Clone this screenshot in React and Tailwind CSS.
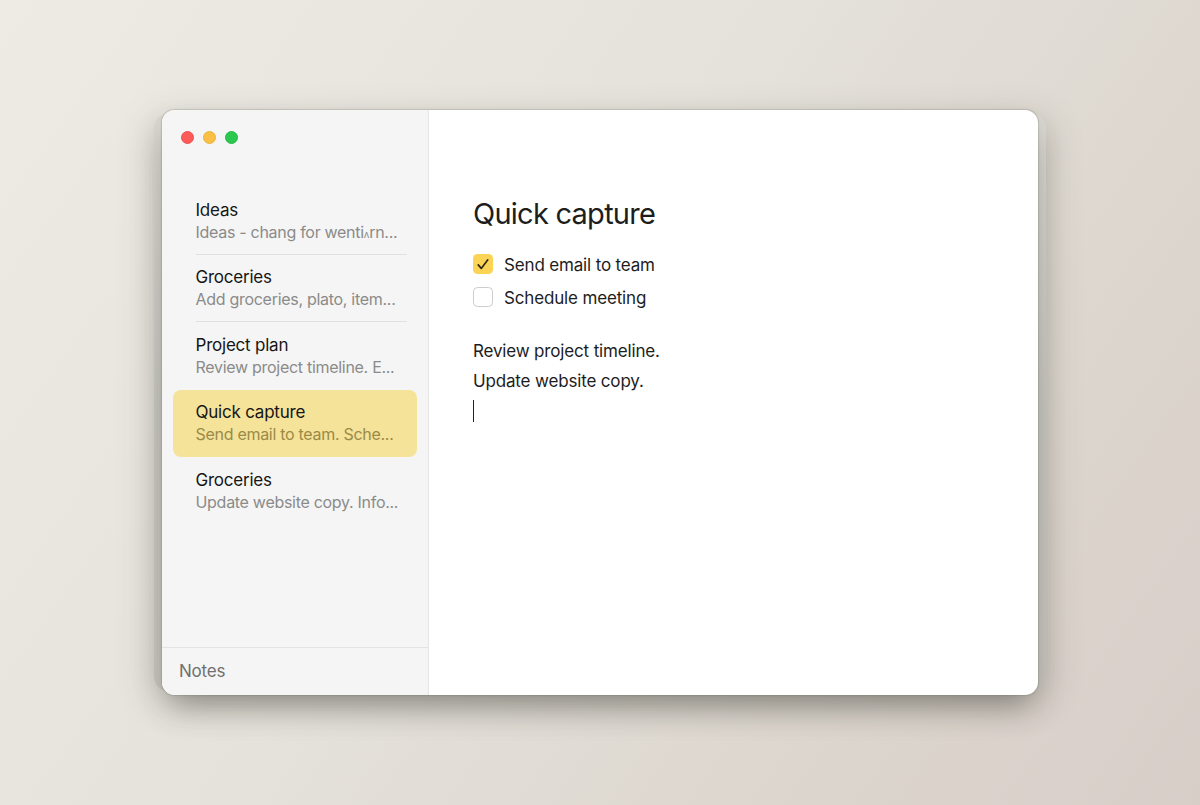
import { useState } from 'react';

const notes = [
  { id: 1, title: 'Ideas', preview: 'Ideas - chang for wenti', tail: 'rn...' },
  { id: 2, title: 'Groceries', preview: 'Add groceries, plato, item...' },
  { id: 3, title: 'Project plan', preview: 'Review project timeline. E...' },
  { id: 4, title: 'Quick capture', preview: 'Send email to team. Sche...' },
  { id: 5, title: 'Groceries', preview: 'Update website copy. Info...' },
];

function TrafficLights() {
  return (
    <div className="flex gap-[9px] pl-[19px] pt-[21px]">
      <span className="size-[13px] rounded-full border border-[#ec5351] bg-[#fc5b57]" />
      <span className="size-[13px] rounded-full border border-[#eab33c] bg-[#fbbf45]" />
      <span className="size-[13px] rounded-full border border-[#25b947] bg-[#2bc84f]" />
    </div>
  );
}

function NoteItem({ note, active, divider, onSelect }) {
  return (
    <li
      onClick={onSelect}
      className={`mx-[11px] h-[67.5px] cursor-default pl-[22.5px] pr-2.5 ${active ? 'rounded-lg bg-[#f5e39a]' : ''}`}
    >
      <div className={`h-full whitespace-nowrap pt-[11.5px] ${divider ? 'border-b border-[#e0e0df]' : ''}`}>
        <p className="text-[17px] leading-[23px] tracking-[-0.22px] text-[#161616]">{note.title}</p>
        <p className={`-mt-px text-[16px] leading-[22px] tracking-[-0.29px] ${active ? 'text-[#9b8a48]' : 'text-[#8b8b8a]'}`}>
          {note.preview}
          {note.tail && (
            <>
              <span className="text-[10px]">ʌ</span>
              {note.tail}
            </>
          )}
        </p>
      </div>
    </li>
  );
}

function Task({ label, done, onToggle }) {
  return (
    <label className="flex h-[33px] items-center gap-[11px]" onClick={onToggle}>
      <span
        className={`flex size-5 items-center justify-center rounded-[4.5px] ${done ? 'bg-[#fbd456]' : 'border-[1.5px] border-[#cdcdcd] bg-white'}`}
      >
        {done && (
          <svg viewBox="0 0 20 20" className="size-5" fill="none">
            <path d="M5.2 10.9 8.3 14.4 14.8 5.8" stroke="#2b2614" strokeWidth="1.6" strokeLinecap="round" strokeLinejoin="round" />
          </svg>
        )}
      </span>
      <span className="pt-[3px]">{label}</span>
    </label>
  );
}

export default function App() {
  const [selected, setSelected] = useState(4);
  const [tasks, setTasks] = useState([
    { label: 'Send email to team', done: true },
    { label: 'Schedule meeting', done: false },
  ]);

  const toggle = (index) =>
    setTasks(tasks.map((t, i) => (i === index ? { ...t, done: !t.done } : t)));

  return (
    <div className="flex h-screen justify-center overflow-hidden bg-[linear-gradient(125deg,#edebe4_0%,#e5e2db_45%,#ddd7cf_72%,#d7cec8_100%)] pt-[110px] font-['Inter',sans-serif]">
      <div className="relative h-[585px] w-[876px]">
        {/* Back plate that shows along both sides */}
        <div className="absolute -inset-x-2 bottom-1 top-1 rounded-[14px] bg-linear-to-b from-[#d9d6d0] via-[#c6c5bf] to-[#c8c4bd] shadow-[0_8px_36px_rgba(70,70,60,0.25)]" />

        {/* Window */}
        <div className="relative flex h-full overflow-hidden rounded-[13px] bg-white shadow-[0_0_1px_0.5px_rgba(110,110,100,0.25),0_18px_32px_-8px_rgba(60,60,50,0.45)]">
          <aside className="flex w-[267px] flex-col border-r border-[#e6e6e5] bg-[#f5f5f5]">
            <TrafficLights />
            <ul className="mt-[43px] flex-1">
              {notes.map((note, i) => (
                <NoteItem
                  key={note.id}
                  note={note}
                  active={note.id === selected}
                  divider={i < 2}
                  onSelect={() => setSelected(note.id)}
                />
              ))}
            </ul>
            <footer className="flex h-[48px] items-center border-t border-[#e3e3e2] pl-[17px] text-[17px] tracking-[-0.2px] text-[#70706f]">
              Notes
            </footer>
          </aside>

          <main className="flex-1 pl-11 pt-[86px] text-[17px] tracking-[-0.16px] text-[#1d1d1d]">
            <h1 className="text-[29px] leading-9 tracking-[-0.75px]">Quick capture</h1>
            <div className="mt-[15.5px]">
              {tasks.map((task, i) => (
                <Task key={task.label} {...task} onToggle={() => toggle(i)} />
              ))}
            </div>
            <div className="mt-[22.5px] leading-[30px]">
              <p>Review project timeline.</p>
              <p>Update website copy.</p>
            </div>
            <div className="mt-1 h-[22px] w-px bg-[#222222]" />
          </main>
        </div>
      </div>
    </div>
  );
}
